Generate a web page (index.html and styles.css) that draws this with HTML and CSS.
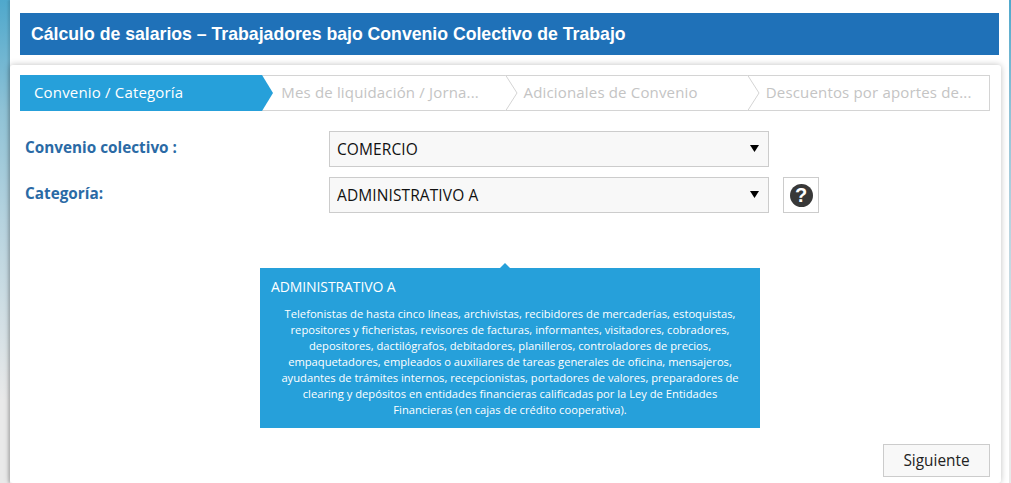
FILE: index.html
```html
<!DOCTYPE html>
<html lang="es">
<head>
  <meta charset="UTF-8">
  <title>Cálculo de salarios</title>
  <link rel="stylesheet" href="styles.css">
</head>
<body>
  <div class="page">
    <h1 class="page-title">Cálculo de salarios – Trabajadores bajo Convenio Colectivo de Trabajo</h1>

    <div class="panel">
      <div class="steps">
        <div class="step step-active">
          <span>Convenio / Categoría</span>
          <svg class="step-arrow" width="12" height="36" viewBox="0 0 12 36"><polygon points="0,0 11,18 0,36" fill="#26a0da"/></svg>
        </div>
        <div class="step">
          <span>Mes de liquidación / Jorna...</span>
          <svg class="step-arrow" width="13" height="36" viewBox="0 0 13 36"><polyline points="0.5,0 12,18 0.5,36" fill="#fff" stroke="#d4d4d4"/></svg>
        </div>
        <div class="step">
          <span>Adicionales de Convenio</span>
          <svg class="step-arrow" width="13" height="36" viewBox="0 0 13 36"><polyline points="0.5,0 12,18 0.5,36" fill="#fff" stroke="#d4d4d4"/></svg>
        </div>
        <div class="step">
          <span>Descuentos por aportes de...</span>
        </div>
      </div>

      <div class="form-row">
        <label class="form-label" for="convenio">Convenio colectivo :</label>
        <select class="form-select" id="convenio">
          <option>COMERCIO</option>
        </select>
      </div>

      <div class="form-row form-row-help">
        <label class="form-label" for="categoria">Categoría:</label>
        <select class="form-select" id="categoria">
          <option>ADMINISTRATIVO A</option>
        </select>
        <button class="help-btn" type="button"><span class="help-icon">?</span></button>
      </div>

      <div class="tooltip">
        <h4>ADMINISTRATIVO A</h4>
        <p>Telefonistas de hasta cinco líneas, archivistas, recibidores de mercaderías, estoquistas,<br>
        repositores y ficheristas, revisores de facturas, informantes, visitadores, cobradores,<br>
        depositores, dactilógrafos, debitadores, planilleros, controladores de precios,<br>
        empaquetadores, empleados o auxiliares de tareas generales de oficina, mensajeros,<br>
        ayudantes de trámites internos, recepcionistas, portadores de valores, preparadores de<br>
        clearing y depósitos en entidades financieras calificadas por la Ley de Entidades<br>
        Financieras (en cajas de crédito cooperativa).</p>
      </div>

      <div class="actions">
        <button class="next-btn" type="button">Siguiente</button>
      </div>
    </div>
  </div>
</body>
</html>
```

FILE: styles.css
```css
html, body { margin: 0; height: 483px; overflow: hidden; }
body { background: linear-gradient(#4fa8cc 0, #8fc2d6 110px, #b6d3df 220px, #e9e9e9 400px); font-family: "Open Sans", sans-serif; }

.page { width: 999px; height: 483px; margin-left: 10px; padding-top: 13px; box-sizing: border-box; background: #fff; box-shadow: -2px 0 2px rgba(0,0,0,0.12); }
.page-title { margin: 0 10px; height: 42px; line-height: 42px; padding-left: 11px; background: #1f71b8; color: #fff; font-family: "Liberation Sans", sans-serif; font-size: 17.66px; font-weight: bold; }

.panel { width: 991px; height: 418px; margin-top: 10px; padding: 10px 10px 0; box-sizing: border-box; background: #fff; border-radius: 3px; box-shadow: 0 0 6px rgba(0,0,0,0.25); }

.steps { display: grid; grid-template-columns: repeat(4, 1fr); height: 36px; border: 1px solid #d4d4d4; border-left: 0; box-sizing: border-box; margin-right: 1px; }
.step { position: relative; margin: -1px 0; padding-left: 19px; line-height: 35px; font-size: 15px; letter-spacing: 0.17px; color: #c4c4c4; white-space: nowrap; }
.step-active { padding-left: 14px; background: #26a0da; color: #fff; }
.step-arrow { position: absolute; top: 0; left: 100%; z-index: 1; }

.form-row { display: flex; align-items: center; height: 36px; margin-top: 20px; }
.form-row-help { margin-top: 10px; }
.form-label { width: 309px; padding-left: 5px; box-sizing: border-box; margin-top: -4px; font-size: 15.3px; font-weight: bold; color: #2a6aa5; }
.form-select { width: 440px; height: 36px; padding: 0 7px; border: 1px solid #ccc; border-radius: 0; background: #f8f8f8 url("data:image/svg+xml,%3Csvg xmlns='http://www.w3.org/2000/svg' width='9' height='7'%3E%3Cpolygon points='0,0 9,0 4.5,7'/%3E%3C/svg%3E") no-repeat right 9px top 13px; appearance: none; font-family: "Open Sans", sans-serif; font-size: 15.5px; letter-spacing: 0.1px; color: #111; }

.help-btn { display: flex; align-items: center; justify-content: center; width: 36px; height: 36px; margin-left: 14px; padding: 0; border: 1px solid #ccc; background: #fff; }
.help-icon { width: 23px; height: 23px; border-radius: 50%; background: #383838; color: #fff; font-family: "Liberation Sans", sans-serif; font-size: 20px; font-weight: bold; line-height: 23px; text-align: center; }

.tooltip { position: relative; width: 500px; height: 160px; margin: 55px 0 0 240px; padding: 10px 11px 0; box-sizing: border-box; background: #26a0da; color: #fff; }
.tooltip::before { content: ""; position: absolute; top: -5px; left: 240px; border: 5px solid transparent; border-top: 0; border-bottom-color: #26a0da; }
.tooltip h4 { margin: 0 0 10px; font-size: 14px; font-weight: normal; line-height: 18px; letter-spacing: -0.1px; }
.tooltip p { margin: 0; font-size: 11.2px; line-height: 16px; text-align: center; white-space: nowrap; }

.actions { display: flex; justify-content: flex-end; margin: 16px 1px 0 0; }
.next-btn { width: 107px; height: 33px; border: 1px solid #ccc; background: #f8f8f8; font-family: "Open Sans", sans-serif; font-size: 15.4px; color: #222; }
```
